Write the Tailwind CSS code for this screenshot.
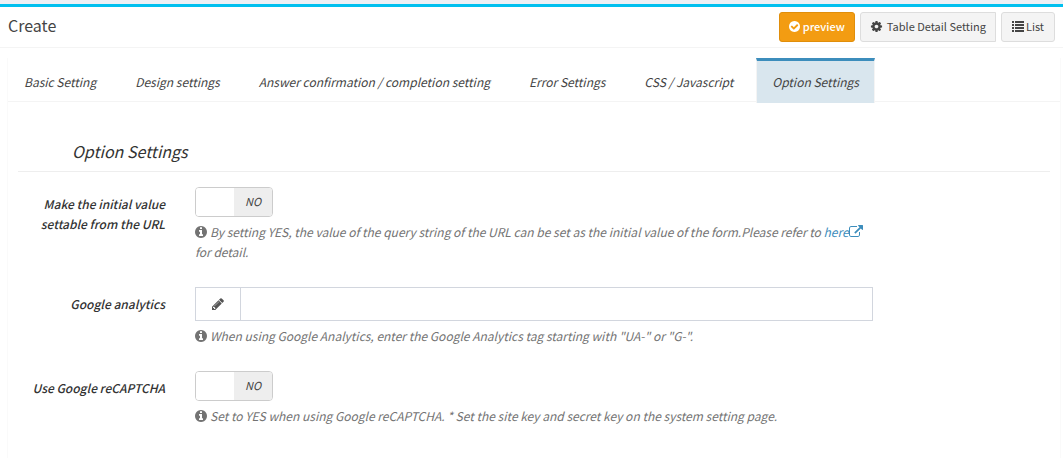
<!DOCTYPE html>
<html lang="en">
<head>
<meta charset="utf-8">
<meta name="viewport" content="width=device-width, initial-scale=1">
<title>Create</title>
<script src="https://cdn.jsdelivr.net/npm/@tailwindcss/browser@4"></script>
</head>
<body class="min-h-screen overflow-x-hidden border-t-4 border-[#ecf0f5] bg-white font-['Noto_Sans_CJK_JP','Noto_Sans',sans-serif] text-[12px] leading-5 text-[#333]">
<svg class="hidden" aria-hidden="true">
  <symbol id="check" viewBox="128 128 1536 1536"><path d="M1412 734q0-28-18-46l-91-90q-19-19-45-19t-45 19l-408 407-226-226q-19-19-45-19t-45 19l-91 90q-18 18-18 46 0 27 18 45l362 362q19 19 45 19 27 0 46-19l543-543q18-18 18-45zm252 162q0 209-103 385.5t-279.5 279.5-385.5 103-385.5-103-279.5-279.5-103-385.5 103-385.5 279.5-279.5 385.5-103 385.5 103 279.5 279.5 103 385.5z"/></symbol>
  <symbol id="cog" viewBox="0 0 1792 1792"><path d="M1152 896q0-106-75-181t-181-75-181 75-75 181 75 181 181 75 181-75 75-181zm512-109v222q0 12-8 23t-20 13l-185 28q-19 54-39 91 35 50 107 138 10 12 10 25t-9 23q-27 37-99 108t-94 71q-12 0-26-9l-138-108q-44 23-91 38-16 136-29 186-7 28-36 28h-222q-14 0-24.5-8.5t-11.5-21.5l-28-184q-49-16-90-37l-141 107q-10 9-25 9-14 0-25-11-126-114-165-168-7-10-7-23 0-12 8-23 15-21 51-66.5t54-70.5q-27-50-41-99l-183-27q-13-2-21-12.5t-8-23.5v-222q0-12 8-23t19-13l186-28q14-46 39-92-40-57-107-138-10-12-10-24 0-10 9-23 26-36 98.5-107.5t94.5-71.5q13 0 26 10l138 107q44-23 91-38 16-136 29-186 7-28 36-28h222q14 0 24.5 8.5t11.5 21.5l28 184q49 16 90 37l142-107q9-9 24-9 13 0 25 10 129 119 165 170 7 8 7 22 0 12-8 23-15 21-51 66.5t-54 70.5q26 50 41 98l183 28q13 2 21 12.5t8 23.5z"/></symbol>
  <symbol id="list" viewBox="0 0 12 12"><path d="M0 1h2v2H0zM3 1h9v2H3zM0 4h2v2H0zM3 4h9v2H3zM0 7h2v2H0zM3 7h9v2H3zM0 10h2v2H0zM3 10h9v2H3z"/></symbol>
  <symbol id="info" viewBox="128 128 1536 1536"><path d="M1152 1376v-160q0-14-9-23t-23-9h-96v-512q0-14-9-23t-23-9h-320q-14 0-23 9t-9 23v160q0 14 9 23t23 9h96v320h-96q-14 0-23 9t-9 23v160q0 14 9 23t23 9h448q14 0 23-9t9-23zm-128-896v-160q0-14-9-23t-23-9h-192q-14 0-23 9t-9 23v160q0 14 9 23t23 9h192q14 0 23-9t9-23zm640 416q0 209-103 385.5t-279.5 279.5-385.5 103-385.5-103-279.5-279.5-103-385.5 103-385.5 279.5-279.5 385.5-103 385.5 103 279.5 279.5 103 385.5z"/></symbol>
  <symbol id="pencil" viewBox="0 0 1792 1792"><path d="M491 1536l91-91-235-235-91 91v107h128v128h107zm523-928q0-22-22-22-10 0-17 7l-542 542q-7 7-7 17 0 22 22 22 10 0 17-7l542-542q7-7 7-17zm-54-192l416 416-832 832h-416v-416zm683 96q0 53-37 90l-166 166-416-416 166-165q36-38 90-38 53 0 91 38l235 234q37 39 37 91z"/></symbol>
  <symbol id="external" viewBox="0 0 1792 1792"><path d="M1408 928v320q0 119-84.5 203.5t-203.5 84.5h-832q-119 0-203.5-84.5t-84.5-203.5v-832q0-119 84.5-203.5t203.5-84.5h704q14 0 23 9t9 23v64q0 14-9 23t-23 9h-704q-66 0-113 47t-47 113v832q0 66 47 113t113 47h832q66 0 113-47t47-113v-320q0-14 9-23t23-9h64q14 0 23 9t9 23zm384-864v512q0 26-19 45t-45 19-45-19l-176-176-652 652q-10 10-23 10t-23-10l-114-114q-10-10-10-23t10-23l652-652-176-176q-19-19-19-45t19-45 45-19h512q26 0 45 19t19 45z"/></symbol>
</svg>

<header class="flex items-start justify-between border-t-3 border-b border-t-[#00c0ef] border-b-[#f4f4f4] pr-2 pb-[5px] pl-2">
  <h1 class="pt-[6px] text-[16px] leading-6 text-[#444]">Create</h1>
  <div class="flex gap-[5px] pt-[5px] text-[11px] leading-[18px] text-[#444]">
    <button type="button" class="flex items-center gap-[3px] rounded-[3px] border border-[#e08e0b] bg-[#f39c12] px-[9px] pt-1 pb-1.5 font-medium text-white"><svg class="size-[11px] fill-current"><use href="#check"/></svg>preview</button>
    <button type="button" class="flex items-center gap-1 rounded-l-[3px] border border-[#ddd] bg-[#f4f4f4] px-[9px] pt-1 pb-1.5"><svg class="size-[13px] fill-current"><use href="#cog"/></svg>Table Detail Setting</button>
    <a href="#" class="flex items-center gap-0.5 rounded-[3px] border border-[#ddd] bg-[#f4f4f4] px-[10px] pt-1 pb-1.5"><svg class="size-3 fill-current"><use href="#list"/></svg>List</a>
  </div>
</header>

<main class="mt-[10px] mr-[2px] ml-[7px] min-h-[400px] border-x border-[#fafafa] italic">
  <nav class="flex gap-[7px] border-b border-[#f4f4f4] text-[#444]">
    <a href="#" class="border-x border-t-3 border-transparent px-[15px] pt-[11px] pb-[9px]">Basic Setting</a>
    <a href="#" class="border-x border-t-3 border-transparent px-[15px] pt-[11px] pb-[9px]">Design settings</a>
    <a href="#" class="border-x border-t-3 border-transparent px-[15px] pt-[11px] pb-[9px]">Answer confirmation / completion setting</a>
    <a href="#" class="border-x border-t-3 border-transparent px-[15px] pt-[11px] pb-[9px]">Error Settings</a>
    <a href="#" class="border-x border-t-3 border-transparent px-[15px] pt-[11px] pb-[9px]">CSS / Javascript</a>
    <a href="#" aria-current="page" class="-mb-0.5 border-x border-t-3 border-x-[#f4f4f4] border-t-[#3c8dbc] bg-[#d9e6ee] px-[15px] pt-[11px] pb-[10px]">Option Settings</a>
  </nav>

  <form class="px-[10px] pt-9">
    <h2 class="border-b border-[#eee] pt-px pb-2 pl-[54px] text-[16px] leading-6">Option Settings</h2>

    <div class="-mx-[15px] grid grid-cols-12 pt-[15px]">
      <label for="url-init" class="col-span-2 px-[15px] pt-[7px] text-right font-medium">Make the initial value settable from the URL</label>
      <div class="col-span-8 px-[15px]">
        <button id="url-init" type="button" role="switch" aria-checked="false" class="flex h-[30px] w-[78px] overflow-hidden rounded border border-[#ccc] text-[11px] leading-[26px] text-[#444] italic"><span class="h-full w-[38px] bg-white"></span><span class="h-full flex-1 bg-[#eee]">NO</span></button>
        <p class="mt-[5px] text-[#737373]"><svg class="-mt-1 mr-[3px] inline size-3 fill-current align-middle"><use href="#info"/></svg>By setting YES, the value of the query string of the URL can be set as the initial value of the form.Please refer to <a href="#" class="whitespace-nowrap text-[#3c8dbc]">here<svg class="-mt-1 inline size-[14px] fill-current align-middle"><use href="#external"/></svg></a> for detail.</p>
      </div>
    </div>

    <div class="-mx-[15px] grid grid-cols-12 pt-[25px]">
      <label for="analytics" class="col-span-2 px-[15px] pt-[7px] text-right font-medium">Google analytics</label>
      <div class="col-span-8 px-[15px]">
        <div class="flex h-[34px] border border-[#d2d6de] bg-white">
          <span class="flex w-[45px] items-center justify-center border-r border-[#d2d6de] text-[#555]"><svg class="size-[14px] fill-current"><use href="#pencil"/></svg></span>
          <input id="analytics" type="text" class="min-w-0 flex-1 px-3 outline-none">
        </div>
        <p class="mt-[5px] text-[#737373]"><svg class="-mt-1 mr-[3px] inline size-3 fill-current align-middle"><use href="#info"/></svg>When using Google Analytics, enter the Google Analytics tag starting with "UA-" or "G-".</p>
      </div>
    </div>

    <div class="-mx-[15px] grid grid-cols-12 pt-[25px]">
      <label for="recaptcha" class="col-span-2 px-[15px] pt-[7px] text-right font-medium">Use Google reCAPTCHA</label>
      <div class="col-span-8 px-[15px]">
        <button id="recaptcha" type="button" role="switch" aria-checked="false" class="flex h-[30px] w-[78px] overflow-hidden rounded border border-[#ccc] text-[11px] leading-[26px] text-[#444] italic"><span class="h-full w-[38px] bg-white"></span><span class="h-full flex-1 bg-[#eee]">NO</span></button>
        <p class="mt-[5px] text-[#737373]"><svg class="-mt-1 mr-[3px] inline size-3 fill-current align-middle"><use href="#info"/></svg>Set to YES when using Google reCAPTCHA. * Set the site key and secret key on the system setting page.</p>
      </div>
    </div>
  </form>
</main>
</body>
</html>
